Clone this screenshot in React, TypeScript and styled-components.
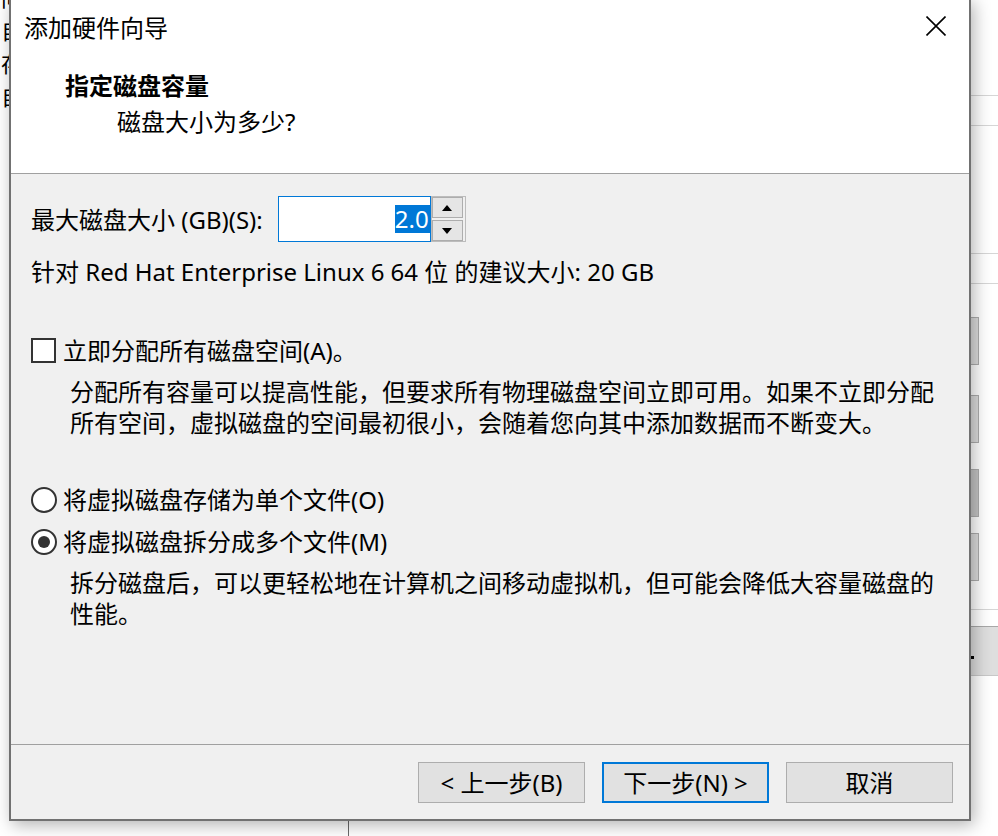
import React from 'react';
import styled, { createGlobalStyle } from 'styled-components';

const GlobalStyle = createGlobalStyle`
  html, body { margin: 0; padding: 0; background: #ffffff; }
  body {
    font-family: "Noto Sans", "Noto Sans CJK SC", sans-serif;
    color: #000;
  }
  * { box-sizing: border-box; }
`;

const Desktop = styled.div`
  position: relative;
  width: 998px;
  height: 836px;
  overflow: hidden;
  background: #ffffff;
`;

/* ---------- underlying window, partly visible ---------- */
const BackText = styled.div`
  position: absolute;
  left: 1px;
  top: -20px;
  display: flex;
  flex-direction: column;
  font-family: "Noto Sans CJK SC", sans-serif;
  font-size: 22px;
  line-height: 33px;
  color: #000;
`;

const BackRule = styled.div<{ $top: number }>`
  position: absolute;
  left: 960px;
  right: 0;
  top: ${(p) => p.$top}px;
  height: 1px;
  background: #d6d6d6;
`;

const BackButton = styled.div<{ $top: number; $dark?: boolean }>`
  position: absolute;
  left: 962px;
  width: 17px;
  top: ${(p) => p.$top}px;
  height: 48px;
  border: 1px solid #adadad;
  background: ${(p) => (p.$dark ? '#c4c4c4' : '#dcdcdc')};
`;

const BackBar = styled.div`
  position: absolute;
  left: 960px;
  right: 0;
  top: 626px;
  height: 50px;
  border-top: 1px solid #a8a8a8;
  border-bottom: 1px solid #c8c8c8;
  background: #dedede;
`;

const BackDot = styled.div`
  position: absolute;
  left: 971px;
  top: 656px;
  width: 3px;
  height: 3px;
  background: #000;
`;

const BackVLine = styled.div`
  position: absolute;
  left: 348px;
  top: 815px;
  width: 1px;
  height: 30px;
  background: #6a6a6a;
`;

/* ---------- dialog ---------- */
const Dialog = styled.div`
  position: absolute;
  left: 9px;
  top: -2px;
  width: 962px;
  height: 823px;
  border: 2px solid #717171;
  background: #f0f0f0;
  display: flex;
  flex-direction: column;
  box-shadow: 3px 4px 16px rgba(0, 0, 0, 0.3);
  font-size: 24px;
`;

const Header = styled.div`
  height: 174px;
  background: #ffffff;
  border-bottom: 1px solid #a0a0a0;
  display: flex;
  flex-direction: column;
`;

const TitleBar = styled.div`
  height: 54px;
  display: flex;
  align-items: center;
  justify-content: space-between;
  padding: 0 23px 0 13px;
`;

const Title = styled.div`
  font-size: 24px;
  line-height: 31px;
`;

const CloseButton = styled.div`
  width: 20px;
  height: 20px;
  margin-top: -2px;
  display: flex;
`;

const Heading = styled.div`
  margin-top: 16px;
  padding-left: 54px;
  font-weight: 700;
  line-height: 31px;
`;

const SubHeading = styled.div`
  margin-top: 5px;
  padding-left: 106px;
  line-height: 31px;
`;

const Content = styled.div`
  flex: 1;
  padding: 22px 0 0 20px;
  display: flex;
  flex-direction: column;
`;

const SpinRow = styled.div`
  height: 46px;
  display: flex;
  align-items: center;
`;

const Label = styled.span`
  line-height: 31px;
  white-space: pre;
`;

const SpinBox = styled.div`
  display: flex;
  margin-left: 15px;
  height: 46px;
`;

const SpinInput = styled.div`
  width: 153px;
  height: 46px;
  border: 1px solid #0078d7;
  background: #ffffff;
  display: flex;
  align-items: center;
  justify-content: flex-end;
  padding-right: 0;
`;

const Selected = styled.span`
  background: #0078d7;
  color: #ffffff;
  height: 28px;
  line-height: 28px;
  padding: 0 1px 0 0;
  display: flex;
  align-items: center;
`;

const SpinFrame = styled.div`
  width: 35px;
  height: 46px;
  border: 1px solid #bcbcbc;
  background: #f0f0f0;
  display: flex;
  flex-direction: column;
  justify-content: space-between;
  padding: 0 2px 0 0;
`;

const SpinArrow = styled.div`
  height: 21px;
  border: 1px solid #adadad;
  background: #e5e5e5;
  display: flex;
  align-items: center;
  justify-content: center;
`;

const Line = styled.div<{ $mt: number; $indent?: number }>`
  margin-top: ${(p) => p.$mt}px;
  padding-left: ${(p) => p.$indent ?? 0}px;
  line-height: 31px;
  white-space: pre;
`;

const OptionRow = styled.div<{ $mt: number }>`
  margin-top: ${(p) => p.$mt}px;
  height: 31px;
  display: flex;
  align-items: center;
`;

const CheckBox = styled.div`
  width: 25px;
  height: 25px;
  border: 2px solid #333333;
  background: #ffffff;
  margin-right: 7px;
`;

const Radio = styled.div<{ $checked?: boolean }>`
  width: 26px;
  height: 26px;
  border-radius: 50%;
  border: 2px solid #333333;
  background: #ffffff;
  margin-right: 6px;
  display: flex;
  align-items: center;
  justify-content: center;
  &::after {
    content: '';
    display: ${(p) => (p.$checked ? 'block' : 'none')};
    width: 12px;
    height: 12px;
    border-radius: 50%;
    background: #333333;
  }
`;

const Footer = styled.div`
  height: 75px;
  border-top: 1px solid #a0a0a0;
  display: flex;
  justify-content: flex-end;
  align-items: flex-start;
  padding: 17px 16px 0 0;
  gap: 17px;
`;

const Button = styled.div<{ $primary?: boolean }>`
  width: 167px;
  height: 41px;
  border: ${(p) => (p.$primary ? '2px solid #0078d7' : '1px solid #adadad')};
  background: #e1e1e1;
  display: flex;
  align-items: center;
  justify-content: center;
  font-size: 24px;
  line-height: 31px;
  white-space: pre;
`;

const Arrow = ({ up }: { up?: boolean }) => (
  <svg width="10" height="6" viewBox="0 0 10 6">
    <polygon points={up ? '0,6 10,6 5,0' : '0,0 10,0 5,6'} fill="#000" />
  </svg>
);

export default function App() {
  return (
    <Desktop>
      <GlobalStyle />
      <BackText>
        <span>问</span>
        <span>自</span>
        <span>存</span>
        <span>自</span>
      </BackText>
      <BackRule $top={95} />
      <BackRule $top={125} />
      <BackRule $top={253} />
      <BackRule $top={283} />
      <BackButton $top={317} />
      <BackButton $top={395} />
      <BackButton $top={469} $dark />
      <BackButton $top={533} />
      <BackRule $top={609} />
      <BackBar />
      <BackDot />
      <BackVLine />

      <Dialog>
        <Header>
          <TitleBar>
            <Title>添加硬件向导</Title>
            <CloseButton>
              <svg width="20" height="20" viewBox="0 0 20 20">
                <path d="M0.5 0.5 L19.5 19.5 M19.5 0.5 L0.5 19.5" stroke="#000" strokeWidth="1.6" />
              </svg>
            </CloseButton>
          </TitleBar>
          <Heading>指定磁盘容量</Heading>
          <SubHeading>磁盘大小为多少?</SubHeading>
        </Header>

        <Content>
          <SpinRow>
            <Label>最大磁盘大小 (GB)(S):</Label>
            <SpinBox>
              <SpinInput>
                <Selected>2.0</Selected>
              </SpinInput>
              <SpinFrame>
                <SpinArrow>
                  <Arrow up />
                </SpinArrow>
                <SpinArrow>
                  <Arrow />
                </SpinArrow>
              </SpinFrame>
            </SpinBox>
          </SpinRow>
          <Line $mt={14}>针对 Red Hat Enterprise Linux 6 64 位 的建议大小: 20 GB</Line>

          <OptionRow $mt={48}>
            <CheckBox />
            <Label>立即分配所有磁盘空间(A)。</Label>
          </OptionRow>
          <Line $mt={10} $indent={39}>分配所有容量可以提高性能，但要求所有物理磁盘空间立即可用。如果不立即分配</Line>
          <Line $mt={0} $indent={39}>所有空间，虚拟磁盘的空间最初很小，会随着您向其中添加数据而不断变大。</Line>

          <OptionRow $mt={46}>
            <Radio />
            <Label>将虚拟磁盘存储为单个文件(O)</Label>
          </OptionRow>
          <OptionRow $mt={11}>
            <Radio $checked />
            <Label>将虚拟磁盘拆分成多个文件(M)</Label>
          </OptionRow>
          <Line $mt={10} $indent={39}>拆分磁盘后，可以更轻松地在计算机之间移动虚拟机，但可能会降低大容量磁盘的</Line>
          <Line $mt={0} $indent={39}>性能。</Line>
        </Content>

        <Footer>
          <Button>{'< 上一步(B)'}</Button>
          <Button $primary>{'下一步(N) >'}</Button>
          <Button>取消</Button>
        </Footer>
      </Dialog>
    </Desktop>
  );
}
